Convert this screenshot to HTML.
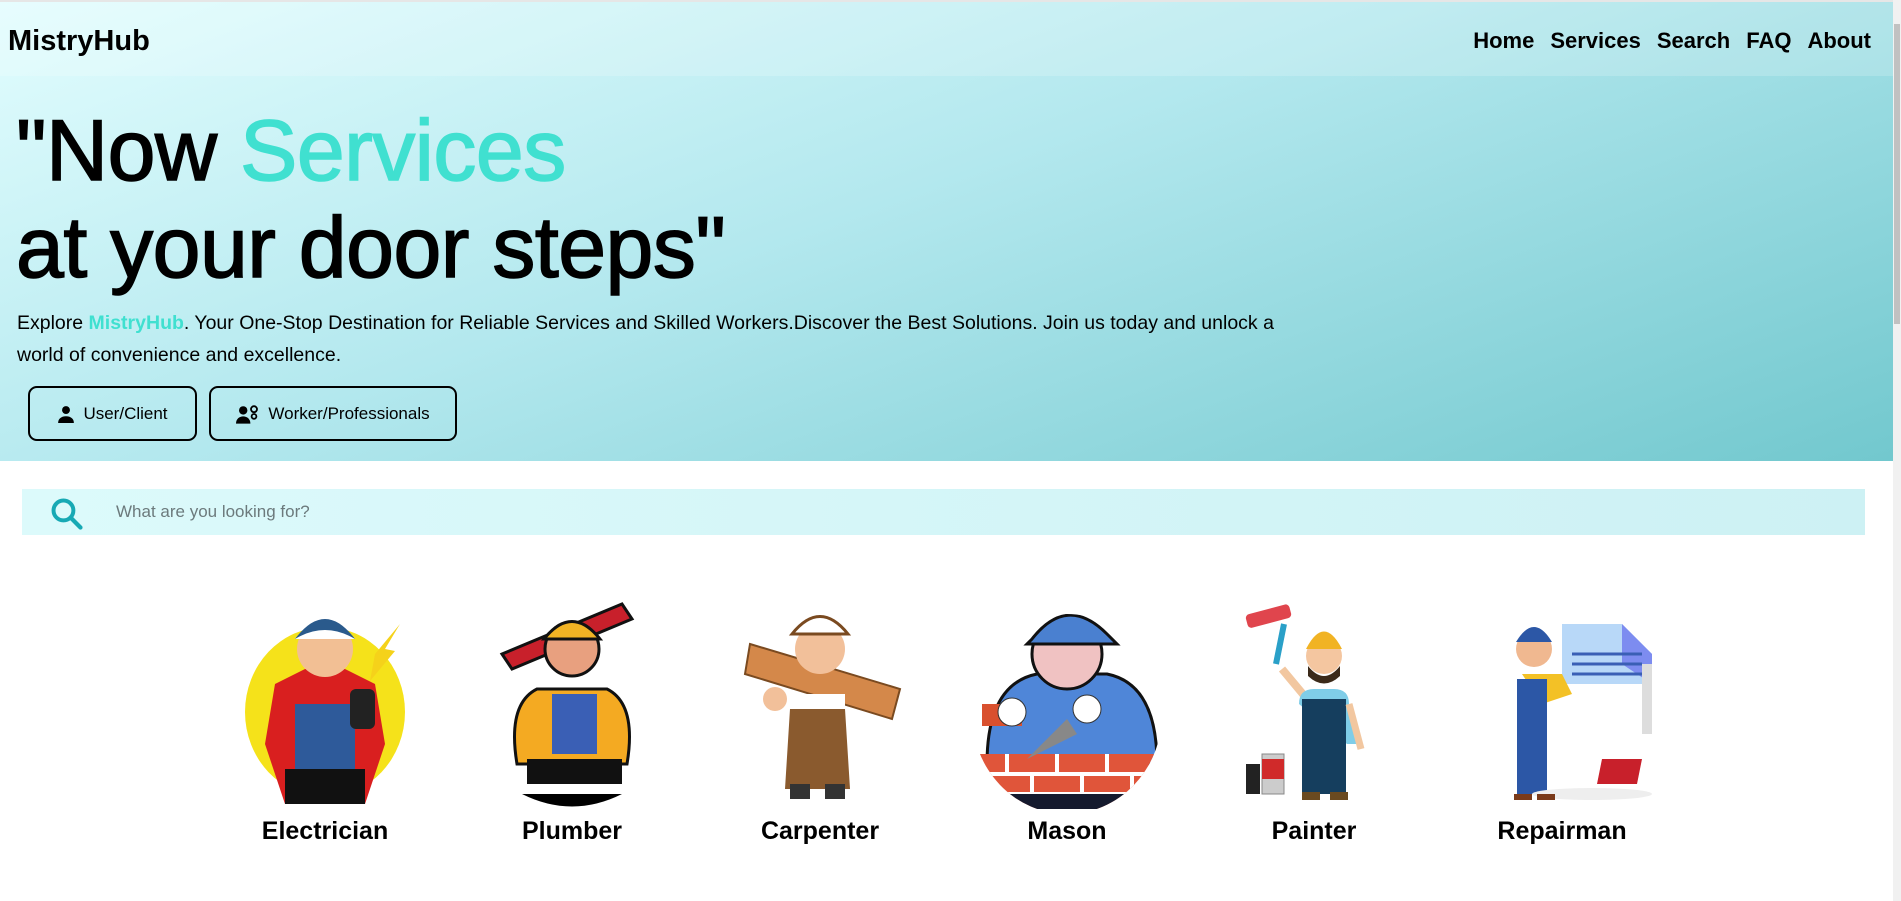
<!DOCTYPE html>
<html><head><meta charset="utf-8"><style>
*{margin:0;padding:0;box-sizing:border-box}
html,body{width:1901px;height:901px;overflow:hidden;background:#fff;font-family:"Liberation Sans",sans-serif;color:#000}
.hero{position:absolute;left:0;top:2px;width:1893px;height:459px;background:linear-gradient(160deg,#e2fdfe 0%,#b3e8ee 45%,#72c8ce 100%)}
.top{position:absolute;left:0;top:0;width:1901px;height:2px;background:#e6e6e6}
.nav{position:absolute;left:0;top:0;width:1893px;height:74px;background:rgba(255,255,255,.18)}
.logo{position:absolute;left:8px;top:23px;font-weight:bold;font-size:29px;letter-spacing:0}
.links{position:absolute;right:22px;top:26px;font-weight:bold;font-size:22px}
.links span{margin-left:16px}
h1{position:absolute;left:16px;top:101px;font-weight:normal;font-size:86px;line-height:97px;letter-spacing:-0.5px;-webkit-text-stroke:1.5px #000}
h1 .t{-webkit-text-stroke:1.5px #40e0d0}
.t{color:#40e0d0}
p.d{position:absolute;left:17px;top:305px;width:1300px;font-size:19.5px;line-height:32px}
.btn{position:absolute;top:384px;height:55px;border:2px solid #000;border-radius:9px;font-size:17px;display:flex;align-items:center;justify-content:center;gap:8px}
.sb{position:absolute;left:22px;top:489px;width:1843px;height:46px;background:linear-gradient(90deg,#dcfafb,#cdf1f4)}
.sb .ph{position:absolute;left:94px;top:13px;font-size:17px;color:#6c7a7c}
.scr{position:absolute;left:1893px;top:0;width:8px;height:901px;background:#f1f1f1}
.scr i{position:absolute;left:1px;top:24px;width:6px;height:300px;background:#c1c1c1}
.svc{position:absolute;top:594px;width:200px;text-align:center}
.svc svg{display:block;width:200px;height:215px}
.svc b{display:block;font-size:25px;margin-top:8px;font-weight:bold}
</style></head><body>
<div class="top"></div>
<div class="hero">
<div class="nav"><div class="logo">MistryHub</div>
<div class="links"><span>Home</span><span>Services</span><span>Search</span><span>FAQ</span><span>About</span></div></div>
<h1>"Now <span class="t">Services</span><br>at your door steps"</h1>
<p class="d">Explore <b class="t">MistryHub</b>. Your One-Stop Destination for Reliable Services and Skilled Workers.Discover the Best Solutions. Join us today and unlock a world of convenience and excellence.</p>
<div class="btn" style="left:28px;width:169px"><svg width="18" height="18" viewBox="0 0 16 16"><circle cx="8" cy="4.5" r="3.5"/><path d="M1 16c0-4 3-6 7-6s7 2 7 6z"/></svg>User/Client</div>
<div class="btn" style="left:209px;width:248px"><svg width="24" height="20" viewBox="0 0 20 16"><circle cx="6" cy="5" r="3.5"/><path d="M0 16c0-4 3-6 6-6s6 2 6 6z"/><circle cx="15" cy="4" r="2.5" fill="none" stroke="#000" stroke-width="1.5"/><circle cx="15" cy="10" r="2" fill="none" stroke="#000" stroke-width="1.5"/></svg>Worker/Professionals</div>
</div>
<div class="sb"><svg style="position:absolute;left:28px;top:8px" width="34" height="34" viewBox="0 0 24 24"><circle cx="9.5" cy="9.5" r="7" fill="none" stroke="#17a9b4" stroke-width="2.8"/><path d="M14.5 14.5l7 7" stroke="#17a9b4" stroke-width="3" stroke-linecap="round"/></svg><div class="ph">What are you looking for?</div></div>

<div class="svc" style="left:225px"><svg viewBox="0 0 200 215"><ellipse cx="100" cy="118" rx="80" ry="85" fill="#f5e21a"/><path d="M40 150l10-60 30-15h40l30 15 10 60-20 60H60z" fill="#d91f1f"/><rect x="70" y="110" width="60" height="70" fill="#2e5a9a"/><rect x="60" y="175" width="80" height="35" fill="#111"/><circle cx="100" cy="55" r="28" fill="#f2bf94"/><path d="M70 45q30-40 60 0z" fill="#2a5a8c"/><path d="M70 45q30-18 60 0" fill="#fff"/><path d="M150 60l25-30-15 25 10 2-25 30z" fill="#f5d21a"/><rect x="125" y="95" width="25" height="40" rx="6" fill="#222"/></svg><b>Electrician</b></div>
<div class="svc" style="left:472px"><svg viewBox="0 0 200 215"><path d="M30 60l120-50 10 15-120 50z" fill="#c8202b" stroke="#111" stroke-width="3"/><path d="M45 170q-10-60 20-75h70q30 15 20 75z" fill="#f4aa22" stroke="#111" stroke-width="3"/><rect x="80" y="100" width="45" height="60" fill="#3a5fb5"/><path d="M55 165h95v25H55z" fill="#111"/><circle cx="100" cy="55" r="27" fill="#e8a07f" stroke="#111" stroke-width="3"/><path d="M72 45q28-35 56 0z" fill="#f1b324" stroke="#111" stroke-width="3"/><path d="M50 200h100q-50 25-100 0z" fill="#000"/></svg><b>Plumber</b></div>
<div class="svc" style="left:720px"><svg viewBox="0 0 200 215"><path d="M30 50l150 45-8 30L25 80z" fill="#d4884a" stroke="#7a4a20" stroke-width="2"/><path d="M70 100h55v60H70z" fill="#fff"/><path d="M70 115h55l5 80H65z" fill="#8a5a2e"/><rect x="70" y="190" width="20" height="15" fill="#333"/><rect x="105" y="190" width="20" height="15" fill="#333"/><circle cx="100" cy="55" r="25" fill="#f2c09a"/><path d="M72 40q28-35 56 0z" fill="#fff" stroke="#7a4a20" stroke-width="3"/><circle cx="55" cy="105" r="12" fill="#f2c09a"/></svg><b>Carpenter</b></div>
<div class="svc" style="left:967px"><svg viewBox="0 0 200 215"><defs><clipPath id="m"><ellipse cx="100" cy="120" rx="95" ry="100"/></clipPath></defs><g clip-path="url(#m)"><path d="M20 170q0-80 50-90h70q50 10 50 90z" fill="#4f86d8" stroke="#111" stroke-width="3"/><circle cx="100" cy="60" r="35" fill="#f0c2c2" stroke="#111" stroke-width="3"/><path d="M65 45q35-45 75-5l10 10H60z" fill="#4a80d0" stroke="#111" stroke-width="3"/><rect x="0" y="160" width="200" height="60" fill="#e0553a"/><path d="M0 180h200M0 200h200M40 160v20M90 160v20M140 160v20M65 180v20M115 180v20M165 180v20" stroke="#fff" stroke-width="4"/><rect x="0" y="200" width="200" height="20" fill="#151a2e"/><rect x="15" y="110" width="40" height="22" fill="#d9502e"/><circle cx="45" cy="118" r="14" fill="#fff" stroke="#333"/><circle cx="120" cy="115" r="14" fill="#fff" stroke="#333"/><path d="M60 165l40-40 10 15z" fill="#888"/></g></svg><b>Mason</b></div>
<div class="svc" style="left:1214px"><svg viewBox="0 0 200 215"><rect x="32" y="15" width="45" height="14" rx="4" fill="#e0454d" transform="rotate(-15 55 22)"/><path d="M70 30l-8 40" stroke="#2aa0c8" stroke-width="6"/><path d="M68 75l25 30" stroke="#f2c7a0" stroke-width="8"/><path d="M85 110q0-15 15-15h20q15 0 15 15l8 40h-10z" fill="#7fcde8"/><rect x="88" y="105" width="44" height="95" fill="#153e5e"/><path d="M135 110l12 45" stroke="#f2c7a0" stroke-width="7"/><circle cx="110" cy="62" r="18" fill="#f4c6a0"/><path d="M94 72q16 20 32 0v10q-16 15-32 0z" fill="#3b2a1a"/><path d="M92 55q18-35 36 0z" fill="#f1b324"/><rect x="48" y="160" width="22" height="40" fill="#ccc" stroke="#888"/><path d="M48 165h22v20H48z" fill="#d02a2a"/><rect x="32" y="170" width="14" height="30" fill="#222"/><rect x="88" y="198" width="18" height="8" fill="#6a4a20"/><rect x="116" y="198" width="18" height="8" fill="#6a4a20"/></svg><b>Painter</b></div>
<div class="svc" style="left:1462px"><svg viewBox="0 0 200 215"><path d="M100 30h60l30 30v30h-90z" fill="#b8d8f8"/><path d="M160 30l30 30v30l-30-20z" fill="#7d8cf0"/><path d="M110 60h70M110 70h70M110 80h70" stroke="#3a5fb5" stroke-width="3"/><rect x="180" y="70" width="10" height="70" fill="#ddd"/><path d="M60 80h40l10 20-30 10z" fill="#f3c126"/><rect x="55" y="85" width="30" height="115" fill="#2c57a6"/><circle cx="72" cy="55" r="18" fill="#f0b890"/><path d="M54 48q18-30 36 0z" fill="#2c57a6"/><path d="M140 165h40l-5 25h-40z" fill="#c8202b"/><ellipse cx="130" cy="200" rx="60" ry="6" fill="#eee"/><rect x="52" y="200" width="18" height="6" fill="#7a3a1a"/><rect x="75" y="200" width="18" height="6" fill="#7a3a1a"/></svg><b>Repairman</b></div>
<div class="scr"><i></i></div>
</body></html>
